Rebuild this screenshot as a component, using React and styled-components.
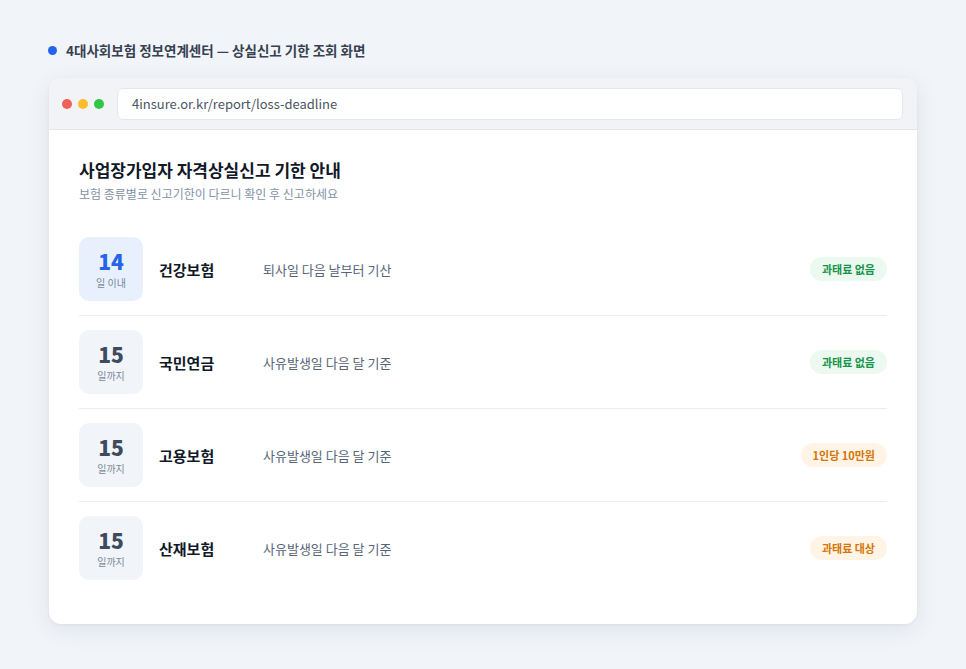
import React from 'react'
import styled, { createGlobalStyle } from 'styled-components'

const GlobalStyle = createGlobalStyle`
    body {
        margin: 0;
        background: #f1f4f8;
        font-family: "Noto Sans CJK KR", "Noto Sans", sans-serif;
    }
`

const Page = styled.main`
    padding: 40px 49px 44px 49px;
    min-height: 669px;
    box-sizing: border-box;
`

const Caption = styled.div`
    display: flex;
    align-items: center;
    gap: 9px;
    height: 20px;
    margin-left: -1px;
    font-size: 13.5px;
    font-weight: 700;
    color: #374151;
    span.dot {
        width: 9px;
        height: 9px;
        border-radius: 50%;
        background: #2563eb;
    }
`

const Window = styled.section`
    margin-top: 18px;
    background: #fff;
    border-radius: 12px;
    overflow: hidden;
    box-shadow: 0 6px 24px rgba(30, 50, 80, 0.08), 0 1px 3px rgba(30, 50, 80, 0.06);
`

const Toolbar = styled.header`
    display: flex;
    align-items: center;
    height: 52px;
    padding: 0 14px 0 13px;
    background: #f1f3f6;
    border-bottom: 1px solid #e3e7ec;
    box-sizing: border-box;
`

const Dots = styled.div`
    display: flex;
    gap: 6px;
    margin-right: 13px;
`

const Dot = styled.span`
    width: 10px;
    height: 10px;
    border-radius: 50%;
    background: ${p => p.color};
`

const Url = styled.div`
    flex: 1;
    height: 30px;
    display: flex;
    align-items: center;
    padding: 0 14px;
    background: #fff;
    border: 1px solid #e3e7ec;
    border-radius: 6px;
    font-size: 13px;
    color: #4b5563;
`

const Body = styled.div`
    padding: 28px 30px 30px 30px;
    h1 {
        margin: 0;
        font-size: 17px;
        line-height: 24px;
        font-weight: 700;
        color: #111827;
    }
    p.sub {
        margin: 3px 0 35px;
        font-size: 12px;
        line-height: 17px;
        color: #8392a7;
    }
`

const Row = styled.div`
    display: flex;
    align-items: center;
    padding: 14px 0;
    border-bottom: 1px solid #e9edf1;
    &:first-of-type { padding-top: 0; }
    &:last-child { border-bottom: none; }
`

const DayBox = styled.div`
    width: 64px;
    height: 64px;
    border-radius: 10px;
    background: ${p => p.$primary ? '#e8f0fe' : '#f1f4f8'};
    display: flex;
    flex-direction: column;
    align-items: center;
    justify-content: center;
    strong {
        font-size: 21px;
        line-height: 24px;
        font-weight: 900;
        color: ${p => p.$primary ? '#2563eb' : '#3d4b5f'};
    }
    small {
        margin-top: 3px;
        font-size: 10px;
        line-height: 13px;
        color: #7b889a;
    }
`

const Name = styled.div`
    width: 104px;
    margin-left: 16px;
    font-size: 15px;
    font-weight: 700;
    color: #111827;
`

const Desc = styled.div`
    flex: 1;
    font-size: 13px;
    color: #56657a;
`

const Pill = styled.span`
    height: 24px;
    padding: 0 12px;
    display: inline-flex;
    align-items: center;
    border-radius: 12px;
    font-size: 11px;
    font-weight: 700;
    background: ${p => p.$tone === 'green' ? '#ebf9f0' : '#fff4e5'};
    color: ${p => p.$tone === 'green' ? '#16944a' : '#d4760a'};
`

const rows = [
    { day: 14, unit: '일 이내', name: '건강보험', desc: '퇴사일 다음 날부터 기산', pill: '과태료 없음', tone: 'green', primary: true },
    { day: 15, unit: '일까지', name: '국민연금', desc: '사유발생일 다음 달 기준', pill: '과태료 없음', tone: 'green' },
    { day: 15, unit: '일까지', name: '고용보험', desc: '사유발생일 다음 달 기준', pill: '1인당 10만원', tone: 'orange' },
    { day: 15, unit: '일까지', name: '산재보험', desc: '사유발생일 다음 달 기준', pill: '과태료 대상', tone: 'orange' },
]

export default function App() {
    return (
        <>
            <GlobalStyle />
            <Page>
                <Caption><span className="dot" />4대사회보험 정보연계센터 — 상실신고 기한 조회 화면</Caption>
                <Window>
                    <Toolbar>
                        <Dots>
                            <Dot color="#f25f58" />
                            <Dot color="#fbbc2e" />
                            <Dot color="#30c748" />
                        </Dots>
                        <Url>4insure.or.kr/report/loss-deadline</Url>
                    </Toolbar>
                    <Body>
                        <h1>사업장가입자 자격상실신고 기한 안내</h1>
                        <p className="sub">보험 종류별로 신고기한이 다르니 확인 후 신고하세요</p>
                        <div>
                            {rows.map(r => (
                                <Row key={r.name}>
                                    <DayBox $primary={r.primary}>
                                        <strong>{r.day}</strong>
                                        <small>{r.unit}</small>
                                    </DayBox>
                                    <Name>{r.name}</Name>
                                    <Desc>{r.desc}</Desc>
                                    <Pill $tone={r.tone}>{r.pill}</Pill>
                                </Row>
                            ))}
                        </div>
                    </Body>
                </Window>
            </Page>
        </>
    )
}
